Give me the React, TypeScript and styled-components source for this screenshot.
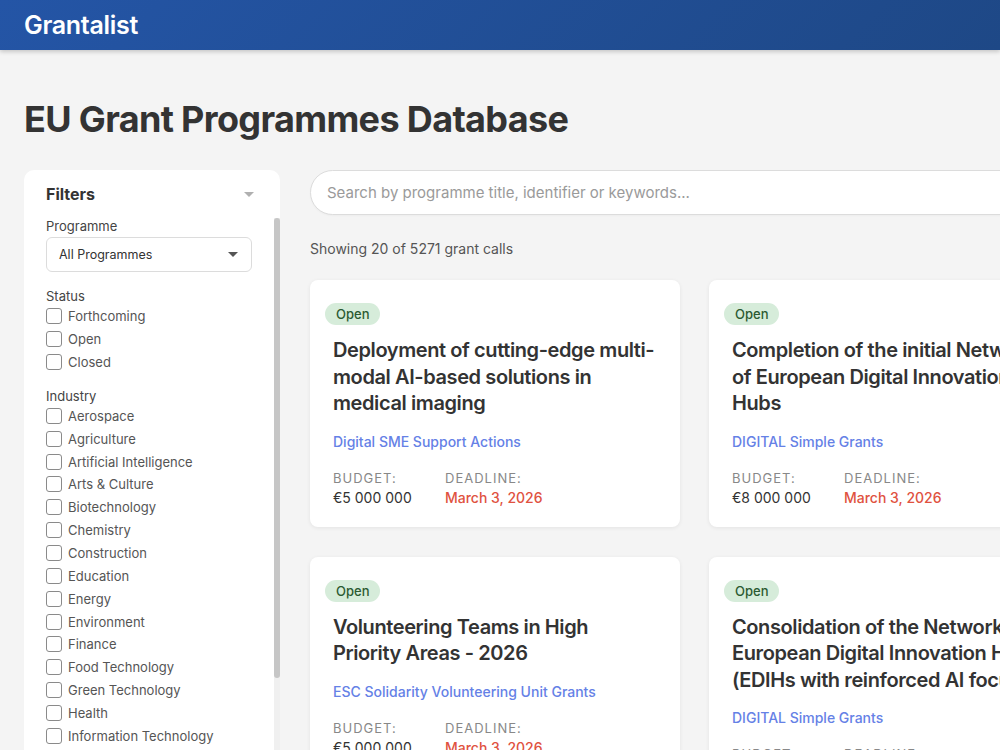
import React from 'react';
import styled, { createGlobalStyle } from 'styled-components';

const GlobalStyle = createGlobalStyle`
  html, body {
    margin: 0;
    padding: 0;
    overflow: hidden;
    background: #f4f4f4;
    font-family: Inter, "Noto Sans", "Liberation Sans", sans-serif;
    color: #333;
  }
  * { box-sizing: border-box; }
`;

const Header = styled.header`
  height: 50px;
  display: flex;
  align-items: center;
  padding: 0 24px;
  background: linear-gradient(135deg, #2455a6 0%, #1e4886 100%);
  box-shadow: 0 2px 4px rgba(0, 0, 0, 0.18);
`;

const Logo = styled.div`
  color: #fff;
  font-size: 25px;
  font-weight: 600;
  letter-spacing: -0.3px;
`;

const Page = styled.main`
  padding: 47px 0 0 24px;
  width: 1220px;
`;

const PageTitle = styled.h1`
  margin: 0 0 29px;
  font-size: 36px;
  line-height: 44px;
  font-weight: 700;
  color: #333;
  letter-spacing: -0.65px;
`;

const Layout = styled.div`
  display: flex;
  gap: 30px;
  align-items: flex-start;
`;

const Sidebar = styled.aside`
  position: relative;
  flex: 0 0 256px;
  background: #fff;
  border-radius: 10px;
  padding: 12px 0 22px 22px;
  overflow: hidden;
`;

const SidebarHead = styled.div`
  display: flex;
  align-items: center;
  justify-content: space-between;
  padding-right: 26px;
  height: 24px;
  margin-bottom: 12px;
`;

const SidebarTitle = styled.h2`
  margin: 0;
  font-size: 16px;
  font-weight: 700;
  color: #333;
`;

const Caret = styled.span<{ $color: string }>`
  width: 0;
  height: 0;
  border-left: 5px solid transparent;
  border-right: 5px solid transparent;
  border-top: 5px solid ${p => p.$color};
`;

const FilterScroll = styled.div`
  height: 540px;
  overflow: hidden;
  padding-right: 28px;
`;

/* custom scrollbar for the filter list */
const ScrollTrack = styled.div`
  position: absolute;
  top: 48px;
  bottom: 0;
  right: 0;
  width: 6px;
  background: #f0f0f0;
`;

const ScrollThumb = styled.div`
  height: 460px;
  border-radius: 3px;
  background: #c6c6c6;
`;

const Group = styled.div<{ $gap?: number }>`
  margin-bottom: ${p => p.$gap ?? 15}px;
`;

const GroupLabel = styled.div`
  font-size: 13px;
  line-height: 16px;
  color: #444;
`;

const Select = styled.div`
  height: 35px;
  border: 1px solid #dcdcdc;
  border-radius: 6px;
  display: flex;
  align-items: center;
  justify-content: space-between;
  padding: 0 13px 0 12px;
  font-size: 12.5px;
  color: #333;
  margin-top: 3px;
`;

const CheckGroup = styled.div`
  padding-top: 1px;
`;

const CheckRow = styled.label`
  display: flex;
  align-items: center;
  gap: 6px;
  height: 22.85px;
  font-size: 13px;
  color: #555;
`;

const Box = styled.span`
  width: 16px;
  height: 16px;
  border: 1px solid #8a8a8a;
  border-radius: 3px;
  background: #fff;
  flex: 0 0 16px;
`;

const Content = styled.section`
  flex: 1;
`;

const SearchInput = styled.input`
  width: 100%;
  height: 45px;
  border: 1px solid #dcdcdc;
  border-radius: 23px;
  background: #fff;
  padding: 0 16px;
  font-family: inherit;
  font-size: 15px;
  color: #333;
  outline: none;
  box-shadow: 0 1px 2px rgba(0, 0, 0, 0.03);

  &::placeholder {
    color: #9a9a9a;
  }
`;

const ResultCount = styled.p`
  margin: 24px 0 21px;
  font-size: 14px;
  line-height: 20px;
  color: #555;
`;

const CardGrid = styled.div`
  display: grid;
  grid-template-columns: repeat(3, 370px);
  gap: 30px 29px;
`;

const Card = styled.article`
  background: #fff;
  border-radius: 8px;
  padding: 23px 23px 19px;
  box-shadow: 0 1px 4px rgba(0, 0, 0, 0.07);
`;

const StatusBadge = styled.span`
  display: inline-block;
  margin-left: -8px;
  height: 22px;
  line-height: 22px;
  padding: 0 11px;
  border-radius: 11px;
  background: #d6ecda;
  color: #2b5a31;
  font-size: 13px;
  font-weight: 500;
`;

const CardTitle = styled.h3`
  margin: 12px 0 15px;
  font-size: 20px;
  line-height: 26.5px;
  font-weight: 600;
  color: #333;
  letter-spacing: -0.4px;
`;

const ProgrammeLink = styled.div`
  font-size: 14px;
  line-height: 20px;
  font-weight: 500;
  color: #6581e6;
`;

const MetaRow = styled.div`
  display: flex;
  margin-top: 18px;
`;

const MetaCol = styled.div`
  min-width: 112px;
`;

const MetaLabel = styled.div`
  font-size: 13px;
  line-height: 17px;
  letter-spacing: 1px;
  text-transform: uppercase;
  color: #888;
`;

const MetaValue = styled.div<{ $accent?: boolean }>`
  font-size: 14px;
  line-height: 20px;
  margin-top: 1px;
  color: ${p => (p.$accent ? '#e0523f' : '#333')};
  font-weight: ${p => (p.$accent ? 500 : 400)};
`;

const statuses = ['Forthcoming', 'Open', 'Closed'];

const industries = [
  'Aerospace',
  'Agriculture',
  'Artificial Intelligence',
  'Arts & Culture',
  'Biotechnology',
  'Chemistry',
  'Construction',
  'Education',
  'Energy',
  'Environment',
  'Finance',
  'Food Technology',
  'Green Technology',
  'Health',
  'Information Technology',
  'Manufacturing',
  'Media',
  'Space',
  'Tourism',
  'Transport',
];

interface GrantCall {
  title: string;
  programme: string;
  budget: string;
  deadline: string;
}

const calls: GrantCall[] = [
  {
    title: 'Deployment of cutting-edge multi-modal AI-based solutions in medical imaging',
    programme: 'Digital SME Support Actions',
    budget: '€5 000 000',
    deadline: 'March 3, 2026',
  },
  {
    title: 'Completion of the initial Network of European Digital Innovation Hubs',
    programme: 'DIGITAL Simple Grants',
    budget: '€8 000 000',
    deadline: 'March 3, 2026',
  },
  {
    title: 'Data spaces for manufacturing and smart communities',
    programme: 'DIGITAL Simple Grants',
    budget: '€12 000 000',
    deadline: 'March 3, 2026',
  },
  {
    title: 'Volunteering Teams in High Priority Areas - 2026',
    programme: 'ESC Solidarity Volunteering Unit Grants',
    budget: '€5 000 000',
    deadline: 'March 3, 2026',
  },
  {
    title: 'Consolidation of the Network of European Digital Innovation Hubs (EDIHs with reinforced AI focus)',
    programme: 'DIGITAL Simple Grants',
    budget: '€6 000 000',
    deadline: 'March 3, 2026',
  },
  {
    title: 'European Digital Media Observatory hubs',
    programme: 'DIGITAL Simple Grants',
    budget: '€4 000 000',
    deadline: 'March 3, 2026',
  },
];

const CheckList: React.FC<{ items: string[] }> = ({ items }) => (
  <CheckGroup>
    {items.map(item => (
      <CheckRow key={item}>
        <Box />
        {item}
      </CheckRow>
    ))}
  </CheckGroup>
);

const GrantCard: React.FC<{ call: GrantCall }> = ({ call }) => (
  <Card>
    <StatusBadge>Open</StatusBadge>
    <CardTitle>{call.title}</CardTitle>
    <ProgrammeLink>{call.programme}</ProgrammeLink>
    <MetaRow>
      <MetaCol>
        <MetaLabel>Budget:</MetaLabel>
        <MetaValue>{call.budget}</MetaValue>
      </MetaCol>
      <MetaCol>
        <MetaLabel>Deadline:</MetaLabel>
        <MetaValue $accent>{call.deadline}</MetaValue>
      </MetaCol>
    </MetaRow>
  </Card>
);

export default function App() {
  return (
    <>
      <GlobalStyle />
      <Header>
        <Logo>Grantalist</Logo>
      </Header>
      <Page>
        <PageTitle>EU Grant Programmes Database</PageTitle>
        <Layout>
          <Sidebar>
            <SidebarHead>
              <SidebarTitle>Filters</SidebarTitle>
              <Caret $color="#b0b0b0" />
            </SidebarHead>
            <FilterScroll>
              <Group $gap={16}>
                <GroupLabel>Programme</GroupLabel>
                <Select>
                  All Programmes
                  <Caret $color="#555" />
                </Select>
              </Group>
              <Group $gap={14}>
                <GroupLabel>Status</GroupLabel>
                <CheckList items={statuses} />
              </Group>
              <Group>
                <GroupLabel>Industry</GroupLabel>
                <CheckList items={industries} />
              </Group>
            </FilterScroll>
            <ScrollTrack>
              <ScrollThumb />
            </ScrollTrack>
          </Sidebar>
          <Content>
            <SearchInput placeholder="Search by programme title, identifier or keywords..." />
            <ResultCount>Showing 20 of 5271 grant calls</ResultCount>
            <CardGrid>
              {calls.map(call => (
                <GrantCard key={call.title} call={call} />
              ))}
            </CardGrid>
          </Content>
        </Layout>
      </Page>
    </>
  );
}
